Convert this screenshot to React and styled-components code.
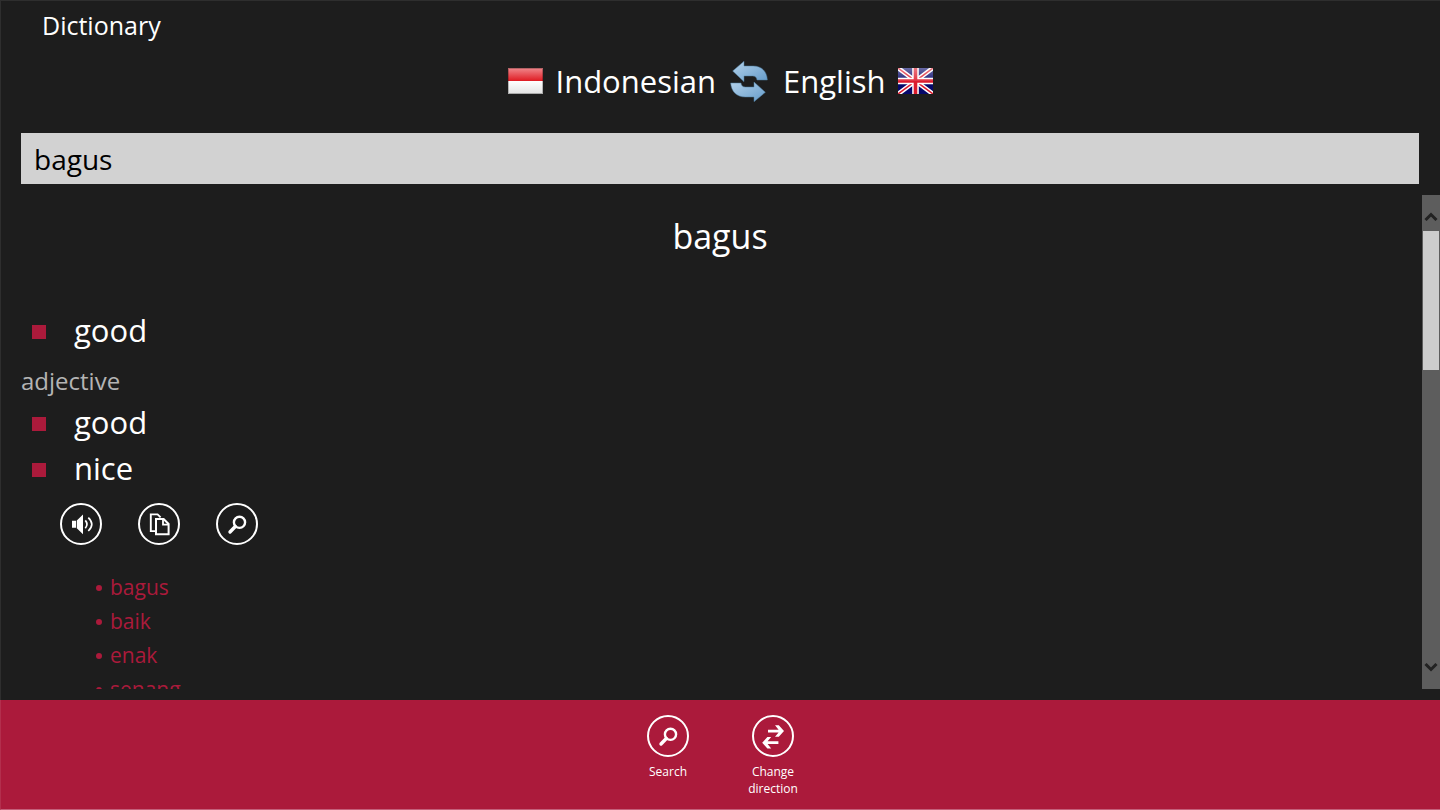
import React, { useState } from "react";
import styled, { createGlobalStyle } from "styled-components";

const GlobalStyle = createGlobalStyle`
  * {
    box-sizing: border-box;
  }

  body {
    margin: 0;
    background-color: #1d1d1d;
    color: #fff;
    font-family: "Open Sans", "Noto Sans", sans-serif;
  }

  button,
  input {
    font-family: inherit;
  }
`;

const Container = styled.div`
  display: flex;
  flex-direction: column;
  height: 100vh;
  border: 1px solid #2e2e2e;
  border-right: none;
  border-bottom: none;
`;

const Title = styled.h1`
  margin: 0;
  padding: 6px 41px 0;
  font-size: 25px;
  line-height: 36px;
  font-weight: 400;
`;

const LanguageBar = styled.div`
  display: flex;
  justify-content: center;
  align-items: center;
  gap: 14px;
  padding: 14px 0 28px;
`;

const Language = styled.div`
  display: flex;
  align-items: center;
  gap: 12px;
  font-size: 31px;
  line-height: 48px;
`;

const FlagIcon = styled.svg`
  width: 35px;
  height: 26px;
`;

const PlainButton = styled.button`
  display: flex;
  padding: 0;
  border: none;
  background: none;
  color: inherit;
  cursor: pointer;
`;

const SearchForm = styled.form`
  padding: 0 21px 11px 20px;
`;

const SearchInput = styled.input`
  display: block;
  width: 100%;
  height: 51px;
  padding: 1px 13px 0;
  border: none;
  border-radius: 0;
  background-color: #d2d2d2;
  color: #000;
  font-size: 28px;
  outline: none;
`;

const Results = styled.main`
  display: flex;
  flex: 1;
  min-height: 0;
  margin-bottom: 11px;
`;

const ResultsContent = styled.div`
  flex: 1;
  overflow: hidden;
  padding: 16px 3px 0 20px;
`;

const Word = styled.h2`
  margin: 0 0 46px;
  font-size: 34px;
  line-height: 50px;
  font-weight: 400;
  text-align: center;
`;

const WordClass = styled.h3`
  margin: 10px 0 0;
  font-size: 24px;
  line-height: 36px;
  font-weight: 400;
  color: #b4b4b4;
`;

const Meanings = styled.ul`
  margin: 0;
  padding: 0;
  list-style: none;
`;

const Meaning = styled.li`
  display: flex;
  align-items: center;
  gap: 28px;
  padding-left: 11px;
  font-size: 31px;
  line-height: 46px;

  &::before {
    content: "";
    width: 14px;
    height: 14px;
    margin-top: 4px;
    background-color: #ab1a3b;
  }
`;

const Actions = styled.div`
  display: flex;
  gap: 36px;
  padding: 12px 39px 25px;
`;

const Synonyms = styled.ul`
  margin: 0;
  padding: 0 0 0 75px;
  list-style: none;
`;

const Synonym = styled.li`
  display: flex;
  align-items: center;
  gap: 8px;
  font-size: 21px;
  line-height: 34px;
  color: #ab1a3b;

  &::before {
    content: "";
    width: 6px;
    height: 6px;
    margin-top: 2px;
    border-radius: 50%;
    background-color: #ab1a3b;
  }
`;

const SynonymLink = styled.a`
  color: inherit;
  text-decoration: none;
`;

const ScrollBar = styled.div`
  display: flex;
  flex-direction: column;
  width: 18px;
  padding: 0 1px;
  background-color: #5d5d5d;
`;

const ScrollButton = styled(PlainButton)`
  justify-content: center;
  align-items: ${(props) => props.$align};
  height: 36px;
  padding: 16px 0;
  color: #222;
`;

const ScrollTrack = styled.div`
  flex: 1;
`;

const ScrollThumb = styled.div`
  height: 33%;
  background-color: #cdcdcd;
`;

const AppBar = styled.footer`
  display: flex;
  justify-content: center;
  align-items: flex-start;
  gap: 27px;
  height: 110px;
  margin-left: -1px;
  padding-top: 15px;
  background-color: #ab1a3b;
  border-left: 1px solid #b32f4d;
  border-bottom: 1px solid #c4607a;
`;

const AppBarButton = styled(PlainButton)`
  flex-direction: column;
  align-items: center;
  gap: 6px;
  width: 78px;
  font-size: 12px;
  line-height: 17px;
`;

const Label = styled.span`
  width: 56px;
`;

const Round = ({ children }) => (
  <svg width="42" height="42" viewBox="0 0 42 42" fill="none" stroke="currentColor" aria-hidden="true">
    <circle cx="21" cy="21" r="20" strokeWidth="2" />
    {children}
  </svg>
);

const SearchIcon = () => (
  <Round>
    <circle cx="23.5" cy="19.3" r="5.6" strokeWidth="2.4" />
    <path d="M19.3 23.5 14 29" strokeWidth="3.4" strokeLinecap="round" />
  </Round>
);

const SpeakerIcon = () => (
  <Round>
    <path d="M12 17.7h4v7h-4zM16.8 17.6 23 11.6v19.6l-6.2-6z" fill="currentColor" stroke="none" />
    <path d="M25.3 17.4q3.4 3.8 0 7.8M28.3 14.6q7 6.7 0 13.4" strokeWidth="1.7" />
  </Round>
);

const CopyIcon = () => (
  <Round>
    <path d="M18 28.1h-5.2V11.4h6.8l3 3" strokeWidth="1.9" />
    <path d="M18 16h7.6l5 5v10.3H18z" strokeWidth="2" />
    <path d="M25 16v5.6h5.6" strokeWidth="1.8" />
  </Round>
);

const SwapIcon = () => (
  <Round>
    <path d="M16 14.7h10.6l-3.6-4.4h3.8l5.2 5.8-5.2 5.7H23l3.6-4.3H16z" fill="currentColor" stroke="none" />
    <path d="M26.4 26.3H15.6l3.6-4.3h-3.8l-5.2 5.7 5.2 5.8h3.8l-3.6-4.4h10.8z" fill="currentColor" stroke="none" />
  </Round>
);

const SyncIcon = () => (
  <svg width="39" height="42" viewBox="0 0 117 126" aria-hidden="true">
    <defs>
      <linearGradient id="syncFill" x1="0" y1="0" x2="1" y2="1">
        <stop offset="0" stopColor="#b4d2ea" />
        <stop offset="1" stopColor="#649bca" />
      </linearGradient>
    </defs>
    <g fill="url(#syncFill)" stroke="#4f7c9f" strokeWidth="1.5">
      <path d="M8 33 42 4v14h27c26 0 42 16 43 42H81c-1-8-5-12-13-12H42v17z" />
      <path d="M106 97 72 125v-14H46C20 111 4 95 2 69h31c1 8 5 12 13 12h26V66z" />
    </g>
  </svg>
);

const IndonesiaFlag = () => (
  <FlagIcon viewBox="0 0 35 26" aria-hidden="true">
    <defs>
      <linearGradient id="redHalf" x1="0" y1="0" x2="0" y2="1">
        <stop offset="0" stopColor="#f0888c" />
        <stop offset="1" stopColor="#df1a22" />
      </linearGradient>
      <linearGradient id="whiteHalf" x1="0" y1="0" x2="0" y2="1">
        <stop offset="0" stopColor="#fff" />
        <stop offset="1" stopColor="#e2e2e2" />
      </linearGradient>
    </defs>
    <path d="M0 0h35v13H0z" fill="url(#redHalf)" />
    <path d="M0 13h35v13H0z" fill="url(#whiteHalf)" />
    <path d="M.5.5h34v25H.5z" fill="none" stroke="#000" strokeOpacity=".25" />
  </FlagIcon>
);

const EnglandFlag = () => (
  <FlagIcon viewBox="0 0 35 26" aria-hidden="true">
    <defs>
      <linearGradient id="gloss" x1="0" y1="0" x2="0" y2="1">
        <stop offset="0" stopColor="#fff" stopOpacity=".4" />
        <stop offset="1" stopColor="#fff" stopOpacity=".1" />
      </linearGradient>
    </defs>
    <path d="M0 0h35v26H0z" fill="#06086a" />
    <path d="m0 0 35 26M35 0 0 26" stroke="#fff" strokeWidth="4.6" />
    <path d="m0 0 35 26M35 0 0 26" stroke="#dc1c2e" strokeWidth="1.5" />
    <path d="M17.5 0v26M0 13h35" stroke="#fff" strokeWidth="6.6" />
    <path d="M17.5 0v26M0 13h35" stroke="#dc1c2e" strokeWidth="3.6" />
    <path d="M0 0h35v13H0z" fill="url(#gloss)" />
  </FlagIcon>
);

const Chevron = ({ d }) => (
  <svg width="14" height="10" viewBox="0 0 14 10" fill="none" stroke="currentColor" aria-hidden="true">
    <path d={d} strokeWidth="3" />
  </svg>
);

const synonyms = ["bagus", "baik", "enak", "senang"];

const App = () => {
  const [query, setQuery] = useState("bagus");
  const [reversed, setReversed] = useState(false);

  const languages = [
    <Language key="id">
      {!reversed && <IndonesiaFlag />}
      <span>Indonesian</span>
      {reversed && <IndonesiaFlag />}
    </Language>,
    <Language key="en">
      {reversed && <EnglandFlag />}
      <span>English</span>
      {!reversed && <EnglandFlag />}
    </Language>,
  ];

  const handleChangeDirection = () => {
    setReversed(!reversed);
  };

  return (
    <Container>
      <GlobalStyle />
      <Title>Dictionary</Title>
      <LanguageBar>
        {reversed ? languages[1] : languages[0]}
        <PlainButton type="button" aria-label="Change direction" onClick={handleChangeDirection}>
          <SyncIcon />
        </PlainButton>
        {reversed ? languages[0] : languages[1]}
      </LanguageBar>
      <SearchForm id="search" onSubmit={(e) => e.preventDefault()}>
        <SearchInput
          aria-label="Word"
          value={query}
          onChange={(e) => setQuery(e.target.value)}
        />
      </SearchForm>
      <Results>
        <ResultsContent>
          <Word>bagus</Word>
          <Meanings>
            <Meaning>good</Meaning>
          </Meanings>
          <WordClass>adjective</WordClass>
          <Meanings>
            <Meaning>good</Meaning>
            <Meaning>nice</Meaning>
          </Meanings>
          <Actions>
            <PlainButton type="button" aria-label="Listen">
              <SpeakerIcon />
            </PlainButton>
            <PlainButton type="button" aria-label="Copy">
              <CopyIcon />
            </PlainButton>
            <PlainButton type="button" aria-label="Look up">
              <SearchIcon />
            </PlainButton>
          </Actions>
          <Synonyms>
            {synonyms.map((word) => (
              <Synonym key={word}>
                <SynonymLink href={`#${word}`}>{word}</SynonymLink>
              </Synonym>
            ))}
          </Synonyms>
        </ResultsContent>
        <ScrollBar>
          <ScrollButton type="button" aria-label="Scroll up" $align="flex-start">
            <Chevron d="M1.5 9 7 3.5 12.5 9" />
          </ScrollButton>
          <ScrollTrack>
            <ScrollThumb />
          </ScrollTrack>
          <ScrollButton type="button" aria-label="Scroll down" $align="flex-end">
            <Chevron d="M1.5 1 7 6.5 12.5 1" />
          </ScrollButton>
        </ScrollBar>
      </Results>
      <AppBar>
        <AppBarButton type="submit" form="search">
          <SearchIcon />
          <Label>Search</Label>
        </AppBarButton>
        <AppBarButton type="button" onClick={handleChangeDirection}>
          <SwapIcon />
          <Label>Change direction</Label>
        </AppBarButton>
      </AppBar>
    </Container>
  );
};

export default App;
